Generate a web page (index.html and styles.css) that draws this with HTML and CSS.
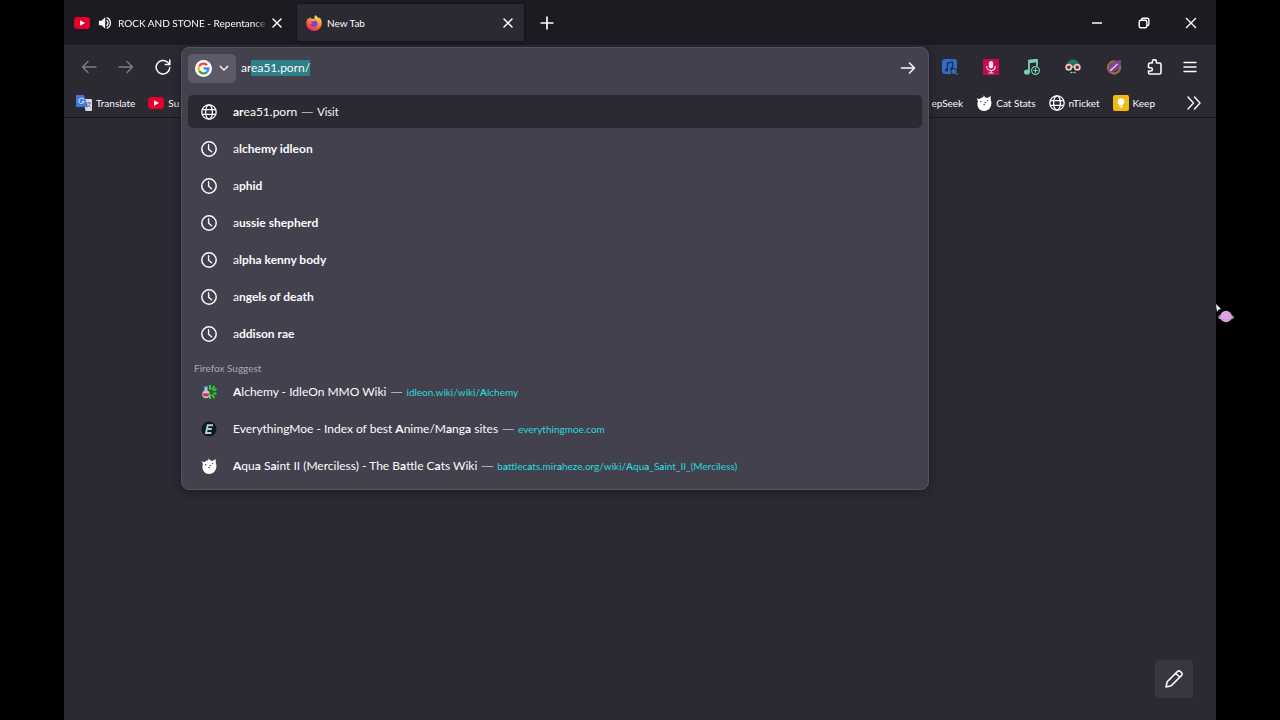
FILE: index.html
```html
<!DOCTYPE html>
<html lang="en">
<head>
    <meta charset="UTF-8">
    <meta name="viewport" content="width=device-width, initial-scale=1.0">
    <title>New Tab</title>
    <link rel="stylesheet" href="styles.css">
</head>
<body>

    <!-- shared icons -->
    <svg class="sprite" aria-hidden="true">
        <symbol id="youtube" viewBox="0 0 16 16">
            <rect x="0" y="2" width="16" height="12" rx="3" fill="#e3002b"/>
            <path d="M6 5.2v5.6L11 8z" fill="#fff"/>
        </symbol>
        <symbol id="clock" viewBox="0 0 16 16">
            <circle cx="8" cy="8" r="7.2" fill="none" stroke="currentColor" stroke-width="1.5"/>
            <path d="M7.6 3.8v4.4l3 2.5" fill="none" stroke="currentColor" stroke-width="1.4" stroke-linecap="round"/>
        </symbol>
        <symbol id="globe" viewBox="0 0 16 16">
            <g fill="none" stroke="currentColor" stroke-width="1.3">
                <circle cx="8" cy="8" r="7.2"/>
                <ellipse cx="8" cy="8" rx="3.4" ry="7.2"/>
                <path d="M1.4 5.6h13.2M1.4 10.4h13.2"/>
            </g>
        </symbol>
        <symbol id="close" viewBox="0 0 16 16">
            <path d="M4 4l8 8M12 4l-8 8" fill="none" stroke="currentColor" stroke-width="1.5" stroke-linecap="round"/>
        </symbol>
        <symbol id="cat" viewBox="0 0 16 16">
            <path d="M.6 3.6l2.800.4L5.400 2.800 7.200 2.200 7.800.2 9 2.200l2.400.8L14.600 1l.2 4c1 2.400.9 5-.5 7.200C13 14.700 10.800 16 8 16s-5-1.400-6-4C1.200 10 1.300 8 2 6z" fill="#fff"/>
            <path d="M4 6.400l1.600.6M8.400 7.800l1-.6.600 1M11 5.800l1.200-.4M7.400 9.400l1.800.5" fill="none" stroke="#2b2a33" stroke-width=".9"/>
        </symbol>
    </svg>

    <div class="window">
        <div class="tabstrip">
            <div class="tab">
                <svg class="icon"><use href="#youtube"/></svg>
                <svg class="icon speaker" viewBox="0 0 16 16">
                    <path d="M1 5.500h3L8.200 1.500v13L4 10.500H1z" fill="currentColor"/>
                    <path d="M10.200 5.200c1.600 1.400 1.600 4.200 0 5.600M10.400 2.200c5 1.800 5 9.800 0 11.600" fill="none" stroke="currentColor" stroke-width="1.500" stroke-linecap="round"/>
                </svg>
                <span class="tab-title fade">ROCK AND STONE - Repentance</span>
                <button class="tab-close" aria-label="Close tab"><svg class="icon"><use href="#close"/></svg></button>
            </div>
            <div class="tab active">
                <svg class="icon firefox" viewBox="0 0 16 16">
                    <defs>
                        <linearGradient id="fox" x1="0.8" y1="0" x2="0.3" y2="1">
                            <stop offset="0.100" stop-color="#ffe14a"/>
                            <stop offset="0.500" stop-color="#ff8430"/>
                            <stop offset="1" stop-color="#ec1b5c"/>
                        </linearGradient>
                    </defs>
                    <path d="M9.500 0c1 1.500 2.500 2 3.400 3.400.6-.1.600-.7.500-1.200 1.600 1.500 2.400 4 2.300 6.200-.2 4.300-3.500 7.500-7.700 7.500S.3 12.700.3 8.500c0-2.300.7-4.200 1.900-5.800 0 .7.100 1.100.4 1.500C3.200 3.200 4 2.600 5 2.300c0 .8.200 1.300.7 1.700 1.300-.3 2-.1 2.800.3C8.100 2.700 8.500 1.200 9.500 0z" fill="url(#fox)"/>
                    <path d="M4.500 7c1-.9 2.200-.3 3.300-.7 1-1.600 3.500-.2 3.600 2.200.1 2.200-1.500 3.500-3.400 3.500-2.300 0-3.800-1.500-3.800-3.500.8.700 1.800.6 2.800.2C6 8.400 5.600 7.300 4.500 7z" fill="#7542e5"/>
                </svg>
                <span class="tab-title">New Tab</span>
                <button class="tab-close" aria-label="Close tab"><svg class="icon"><use href="#close"/></svg></button>
            </div>
            <button class="new-tab" aria-label="New tab">
                <svg class="icon" viewBox="0 0 16 16"><path d="M8 2.200v11.600M2.200 8h11.600" stroke="currentColor" stroke-width="1.700" stroke-linecap="round"/></svg>
            </button>
            <div class="window-buttons">
                <button aria-label="Minimize"><svg class="icon" viewBox="0 0 16 16"><path d="M3 8h10" stroke="currentColor" stroke-width="1.500"/></svg></button>
                <button aria-label="Restore"><svg class="icon" viewBox="0 0 16 16"><g fill="none" stroke="currentColor" stroke-width="1.400"><rect x="3.200" y="5.200" width="7.600" height="7.600" rx="1.500"/><path d="M5.500 5V4.500Q5.500 3.200 7 3.200h4q1.900 0 1.900 1.900v3.900q0 1.500-1.400 1.500H11"/></g></svg></button>
                <button aria-label="Close window"><svg class="icon" viewBox="0 0 16 16"><path d="M3 3l10 10M13 3L3 13" stroke="currentColor" stroke-width="1.400"/></svg></button>
            </div>
        </div>

        <div class="navbar">
            <div class="nav-left">
                <button class="dim" aria-label="Back"><svg class="icon" viewBox="0 0 16 16"><path d="M15 8H1.500M7 2.500L1.500 8 7 13.500" fill="none" stroke="currentColor" stroke-width="1.300" stroke-linecap="round"/></svg></button>
                <button class="dim" aria-label="Forward"><svg class="icon" viewBox="0 0 16 16"><path d="M1 8h13.500M9 2.500L14.500 8 9 13.500" fill="none" stroke="currentColor" stroke-width="1.300" stroke-linecap="round"/></svg></button>
                <button aria-label="Reload"><svg class="icon" viewBox="0 0 16 16"><path d="M14.800 8.500A6.800 6.800 0 1 1 12.600 3.200L14.500 5" fill="none" stroke="currentColor" stroke-width="1.500" stroke-linecap="round"/><path d="M14.800 1v4.500h-4.500" fill="none" stroke="currentColor" stroke-width="1.500" stroke-linecap="round"/></svg></button>
            </div>

            <div class="urlbar-slot">
                <div class="urlbar">
                    <div class="urlbar-input">
                        <button class="engine" aria-label="Search engine">
                            <svg class="google" viewBox="0 0 18 18">
                                <circle cx="9" cy="9" r="9" fill="#fff"/>
                                <g fill="none" stroke-width="2.400">
                                    <path d="M12.800 5.400A5.200 5.200 0 0 0 4.500 6.500" stroke="#ea4335"/>
                                    <path d="M4.500 6.400a5.200 5.200 0 0 0 0 5.200" stroke="#fbbc05"/>
                                    <path d="M4.500 11.500a5.200 5.200 0 0 0 8.100 1.300" stroke="#34a853"/>
                                    <path d="M12.500 12.900A5.200 5.200 0 0 0 14.200 9H9.200" stroke="#4285f4"/>
                                </g>
                            </svg>
                            <svg class="arrow" viewBox="0 0 10 10"><path d="M1.200 3.200L5 7l3.800-3.800" fill="none" stroke="currentColor" stroke-width="1.300" stroke-linecap="round"/></svg>
                        </button>
                        <input type="text" id="url" value="area51.porn/" aria-label="Search with Google or enter address" spellcheck="false" autocomplete="off">
                        <button class="go" aria-label="Go"><svg class="icon" viewBox="0 0 16 16"><path d="M1.500 8h13M9.500 3l5 5-5 5" fill="none" stroke="currentColor" stroke-width="1.500" stroke-linecap="round"/></svg></button>
                    </div>
                    <div class="results">
                        <a href="#" class="row selected"><svg class="icon"><use href="#globe"/></svg><span class="title"><b>ar</b>ea51.porn</span><span class="dash">—</span><span class="action">Visit</span></a>
                        <a href="#" class="row"><svg class="icon"><use href="#clock"/></svg><span class="title">a<b>lchemy idleon</b></span></a>
                        <a href="#" class="row"><svg class="icon"><use href="#clock"/></svg><span class="title">a<b>phid</b></span></a>
                        <a href="#" class="row"><svg class="icon"><use href="#clock"/></svg><span class="title">a<b>ussie shepherd</b></span></a>
                        <a href="#" class="row"><svg class="icon"><use href="#clock"/></svg><span class="title">a<b>lpha kenny body</b></span></a>
                        <a href="#" class="row"><svg class="icon"><use href="#clock"/></svg><span class="title">a<b>ngels of death</b></span></a>
                        <a href="#" class="row"><svg class="icon"><use href="#clock"/></svg><span class="title">a<b>ddison rae</b></span></a>
                        <div class="group-label">Firefox Suggest</div>
                        <a href="#" class="row">
                            <svg class="icon" viewBox="0 0 16 16">
                                <path d="M9 8V1M9 8l4.500-6M9 8l6.500-3M9 8l6.500 2M9 8l4.500 6M9 8v7" stroke="#35d02f" stroke-width="2"/>
                                <circle cx="10" cy="8" r="2.800" fill="#176b24"/>
                                <path d="M3.500 3h3v3.500a4 4 0 1 1-3 0z" fill="#b8c7d8"/>
                                <path d="M1.200 9.500h7.700a4 4 0 0 1-7.700 0z" fill="#e0293a"/>
                                <path d="M2.800 2.800h4.400" stroke="#5b86b5" stroke-width="1.300"/>
                            </svg>
                            <span class="title"><b>A</b>lchemy - IdleOn MMO Wiki</span><span class="dash">—</span><span class="url">idleon.wiki/wiki/<b>A</b>lchemy</span>
                        </a>
                        <a href="#" class="row">
                            <svg class="icon" viewBox="0 0 16 16">
                                <circle cx="8" cy="8" r="7.600" fill="#10191d"/>
                                <path d="M12 4.200H6.700L5 12h5.300M6 8h4.800" fill="none" stroke="#a9d5d6" stroke-width="1.900"/>
                            </svg>
                            <span class="title">EverythingMoe - Index of best <b>A</b>nime/M<b>a</b>ng<b>a</b> sites</span><span class="dash">—</span><span class="url">everythingmoe.com</span>
                        </a>
                        <a href="#" class="row"><svg class="icon"><use href="#cat"/></svg><span class="title"><b>A</b>qu<b>a</b> S<b>a</b>int II (Merciless) - The B<b>a</b>ttle C<b>a</b>ts Wiki</span><span class="dash">—</span><span class="url">b<b>a</b>ttlec<b>a</b>ts.mir<b>a</b>heze.org/wiki/<b>A</b>qu<b>a</b>_S<b>a</b>int_II_(Merciless)</span></a>
                    </div>
                </div>
            </div>

            <div class="nav-right">
                <button aria-label="Music search">
                    <svg class="icon" viewBox="0 0 16 16"><path d="M3 0h9q3 0 3 3v7.500L10 15H3q-3 0-3-3V3q0-3 3-3z" fill="#2f6fc2"/><path d="M5.500 10.500V4l5-1v6" fill="none" stroke="#1c3057" stroke-width="1.400"/><circle cx="4.500" cy="11" r="1.700" fill="#1c3057"/><circle cx="9.500" cy="9.500" r="1.500" fill="#1c3057"/><circle cx="12" cy="12.500" r="3" fill="#2f6fc2" stroke="#2b2a33"/><path d="M14 14l1.700 1.700" stroke="#2f6fc2" stroke-width="1.500"/></svg>
                </button>
                <button aria-label="Voice">
                    <svg class="icon" viewBox="0 0 16 16"><path d="M0 0h16v16H0z" fill="#c6085a"/><rect x="5.800" y="2" width="4.400" height="7.500" rx="2.200" fill="#f6dce8"/><path d="M3.800 7v.8c0 5 8.400 5 8.400 0V7M8 11.500V14M5.500 14h5" fill="none" stroke="#f6dce8" stroke-width="1.200"/></svg>
                </button>
                <button aria-label="Add music">
                    <svg class="icon" viewBox="0 0 16 16"><path d="M5 13V1.500L13 .8V7" fill="none" stroke="#78d3b5" stroke-width="1.800"/><path d="M5 1.200L13 .3v3L5 4.200z" fill="#78d3b5"/><ellipse cx="3" cy="13" rx="3" ry="2.600" fill="#78d3b5"/><circle cx="11.500" cy="11.500" r="3.900" fill="#2b2a33" stroke="#78d3b5" stroke-width="1.200"/><path d="M11.500 9.300v4.400M9.300 11.500h4.400" stroke="#78d3b5" stroke-width="1.200"/></svg>
                </button>
                <button aria-label="Reader">
                    <svg class="icon" viewBox="0 0 16 16"><path d="M1.500 8C1-2 15-2 14.500 8z" fill="#27716f"/><path d="M3 9h10v3.500q-1 3-5 3t-5-3z" fill="#15282d"/><circle cx="3.800" cy="8.200" r="2.600" fill="#542a34" stroke="#f3c4bd" stroke-width="1.800"/><circle cx="12.200" cy="8.200" r="2.600" fill="#542a34" stroke="#f3c4bd" stroke-width="1.800"/><path d="M6.500 8h3" stroke="#f3c4bd" stroke-width="1.300"/><path d="M5.300 13.400h2.200M8.500 13.400h2.200" stroke="#9fc5c5" stroke-width="1.500"/></svg>
                </button>
                <button aria-label="Stylus">
                    <svg class="icon" viewBox="0 0 16 16"><circle cx="8" cy="8.500" r="6" fill="#41314a" stroke="#987036" stroke-width="2.400"/><path d="M2.500 13.500C1.500 7.500 6 2 15 1 15.500 8 10 13.500 2.500 13.500z" fill="#7b439b"/><path d="M4 12L11.500 5" stroke="#e8c7e8" stroke-width="1.500"/></svg>
                </button>
                <button aria-label="Extensions">
                    <svg class="icon" viewBox="0 0 16 16"><path d="M1.500 9V5.400Q1.500 4 3 4h2.400V2.600a2 2 0 0 1 4 0V4h3.100q1.500 0 1.500 1.500v8q0 1.500-1.500 1.500H3q-1.500 0-1.500-1.500V12h2.300a1.600 1.600 0 0 0 0-3.200H1.500" fill="none" stroke="currentColor" stroke-width="1.600" stroke-linejoin="round"/></svg>
                </button>
                <button class="menu" aria-label="Menu">
                    <svg class="icon" viewBox="0 0 16 16"><path d="M2 3.500h12M2 8h12M2 12.500h12" stroke="currentColor" stroke-width="1.400" stroke-linecap="round"/></svg>
                </button>
            </div>
        </div>

        <div class="bookmarks">
            <a href="#">
                <svg class="icon" viewBox="0 0 16 16"><path d="M7 4h8q1 0 1 1v10q0 1-1 1H9.500z" fill="#d6dbe3"/><path d="M1 0h7l4 12H1q-1 0-1-1V1q0-1 1-1z" fill="#3f78dc"/><path d="M7.800 4.700A2.600 2.600 0 1 0 8 6.500H5.800" fill="none" stroke="#c8dafb" stroke-width="1.100"/><path d="M10.500 8h4.500M12.500 7v1M14 8c-.4 2-1.500 3.300-3 4.200M11.500 9.500l3 3" fill="none" stroke="#687487" stroke-width=".9"/></svg>
                Translate
            </a>
            <a href="#"><svg class="icon"><use href="#youtube"/></svg>Su</a>
            <div class="bookmarks-end">
                <a href="#">epSeek</a>
                <a href="#"><svg class="icon"><use href="#cat"/></svg>Cat Stats</a>
                <a href="#"><svg class="icon"><use href="#globe"/></svg>nTicket</a>
                <a href="#">
                    <svg class="icon" viewBox="0 0 16 16"><rect width="16" height="16" rx="2" fill="#f2b90f"/><path d="M8 3.300a3.400 3.400 0 0 0-2 6.200v1h4v-1a3.400 3.400 0 0 0-2-6.200zM6.500 11.300h3v1.300h-3z" fill="#fff"/></svg>
                    Keep
                </a>
                <button class="more" aria-label="More bookmarks"><svg class="icon" viewBox="0 0 16 16"><path d="M2 2l5.500 6L2 14M8.500 2L14 8l-5.500 6" fill="none" stroke="currentColor" stroke-width="1.400" stroke-linecap="round"/></svg></button>
            </div>
        </div>

        <div class="content">
            <button class="customize" aria-label="Customize">
                <svg viewBox="0 0 20 20"><path d="M2 18l1.200-5.200L13.600 2.400q1.300-1.200 2.600 0l1.400 1.400q1.200 1.300 0 2.600L7.200 16.800zM11.800 4.200l4 4" fill="none" stroke="currentColor" stroke-width="1.600" stroke-linejoin="round"/></svg>
            </button>
        </div>

        <svg class="pointer" viewBox="0 0 20 22">
            <path d="M0 1l5 5-2.500.5L1 9z" fill="#fff"/>
            <ellipse cx="10" cy="14" rx="8" ry="3" fill="#8d87bd"/>
            <circle cx="10" cy="13.500" r="5.800" fill="#e2a0dc"/>
            <path d="M3 15q7 4 14 0" fill="none" stroke="#b5a0d0" stroke-width="1.200"/>
        </svg>
    </div>

    <script>
        // autofilled part of the address stays selected
        const url = document.getElementById("url");
        url.focus();
        url.setSelectionRange(2, url.value.length);
    </script>

</body>
</html>
```

FILE: styles.css
```css
* { box-sizing: border-box; }
body { margin: 0; background: #000; color: #fbfbfe; font-family: Lato, "Open Sans", sans-serif; font-size: 12px; }
a { color: inherit; text-decoration: none; }
button { display: flex; align-items: center; justify-content: center; padding: 0; border: none; background: none; color: inherit; font: inherit; }
.sprite { display: none; }
.icon { width: 16px; height: 16px; flex: none; }

.window { position: relative; display: flex; flex-direction: column; min-height: 100vh; margin: 0 5%; background: #2b2a33; }

.tabstrip { display: flex; align-items: center; gap: 4px; height: 45px; padding: 0 2px; background: #1c1b22; }
.tab { display: flex; align-items: center; width: 227px; height: 37px; padding: 0 8px; border-radius: 2px; font-size: 10px; }
.tab.active { background: #2b2a33; box-shadow: 0 0 3px #111016; }
.speaker { width: 14px; height: 14px; margin-left: 8px; }
.tab-title { flex: 1; margin-left: 6px; white-space: nowrap; }
.fade { -webkit-mask-image: linear-gradient(to left, transparent, #000 16px); mask-image: linear-gradient(to left, transparent, #000 16px); }
.firefox { margin-left: 1px; }
.active .tab-title { margin-left: 5px; }
.tab-close { width: 16px; height: 24px; }
.new-tab { width: 37px; height: 37px; }
.window-buttons { display: flex; margin-left: auto; }
.window-buttons button { width: 47px; height: 45px; }

.navbar { display: flex; align-items: center; height: 44px; }
.nav-left { display: flex; padding-left: 6px; }
.nav-left button { width: 37px; height: 37px; }
.nav-left .dim { color: #807f89; }
.nav-right { display: flex; padding-right: 11px; }
.nav-right button { width: 41px; height: 37px; }
.nav-right .menu { width: 30px; }

.urlbar-slot { position: relative; flex: 1; align-self: stretch; }
.urlbar { position: absolute; top: 2px; left: 0; right: 0; z-index: 2; padding: 0 6px 7px; background: #42414d; border: 1px solid #54535f; border-radius: 8px; box-shadow: 0 2px 8px #1c1b22; }
.urlbar-input { display: flex; align-items: center; height: 40px; }
.engine { gap: 7px; width: 48px; height: 29px; background: #5b5a66; border-radius: 5px; }
.google { width: 17px; height: 17px; }
.arrow { width: 10px; height: 10px; }
.urlbar-input input { flex: 1; min-width: 0; padding: 0; margin-left: 5px; border: none; outline: none; background: none; color: #fbfbfe; font: inherit; line-height: 16px; }
.urlbar-input input::selection { background: #2f7f86; color: #fbfbfe; }
.go { width: 28px; height: 28px; }

.results { display: flex; flex-direction: column; gap: 4px; margin-top: 7px; }
.row { display: flex; align-items: center; height: 33px; padding: 0 13px; border-radius: 5px; white-space: nowrap; }
.row.selected { background: #2b2a33; }
.title { margin-left: 16px; }
.dash { margin: 0 4px; color: #b0afb8; font-family: "Open Sans", sans-serif; }
.action { font-size: 11px; }
.url { color: #2bd9de; font-size: 10px; }
.group-label { padding: 6px 6px 0; margin-bottom: -5px; color: #aaa9b3; font-size: 10px; line-height: 16px; }

.bookmarks { display: flex; align-items: center; gap: 13px; height: 29px; padding: 0 11px 0 12px; border-bottom: 1px solid #15141a; font-size: 10px; white-space: nowrap; }
.bookmarks a { display: flex; align-items: center; gap: 4px; }
.bookmarks-end { display: flex; align-items: center; gap: 13px; margin-left: auto; }
.more { width: 22px; height: 22px; margin-left: 15px; }

.content { display: flex; flex: 1; align-items: flex-end; justify-content: flex-end; padding: 22px 23px; }
.customize { width: 38px; height: 38px; background: #38373f; border-radius: 4px; }
.customize svg { width: 20px; height: 20px; }

.pointer { position: absolute; top: 303px; right: -20px; width: 20px; height: 22px; }
```
